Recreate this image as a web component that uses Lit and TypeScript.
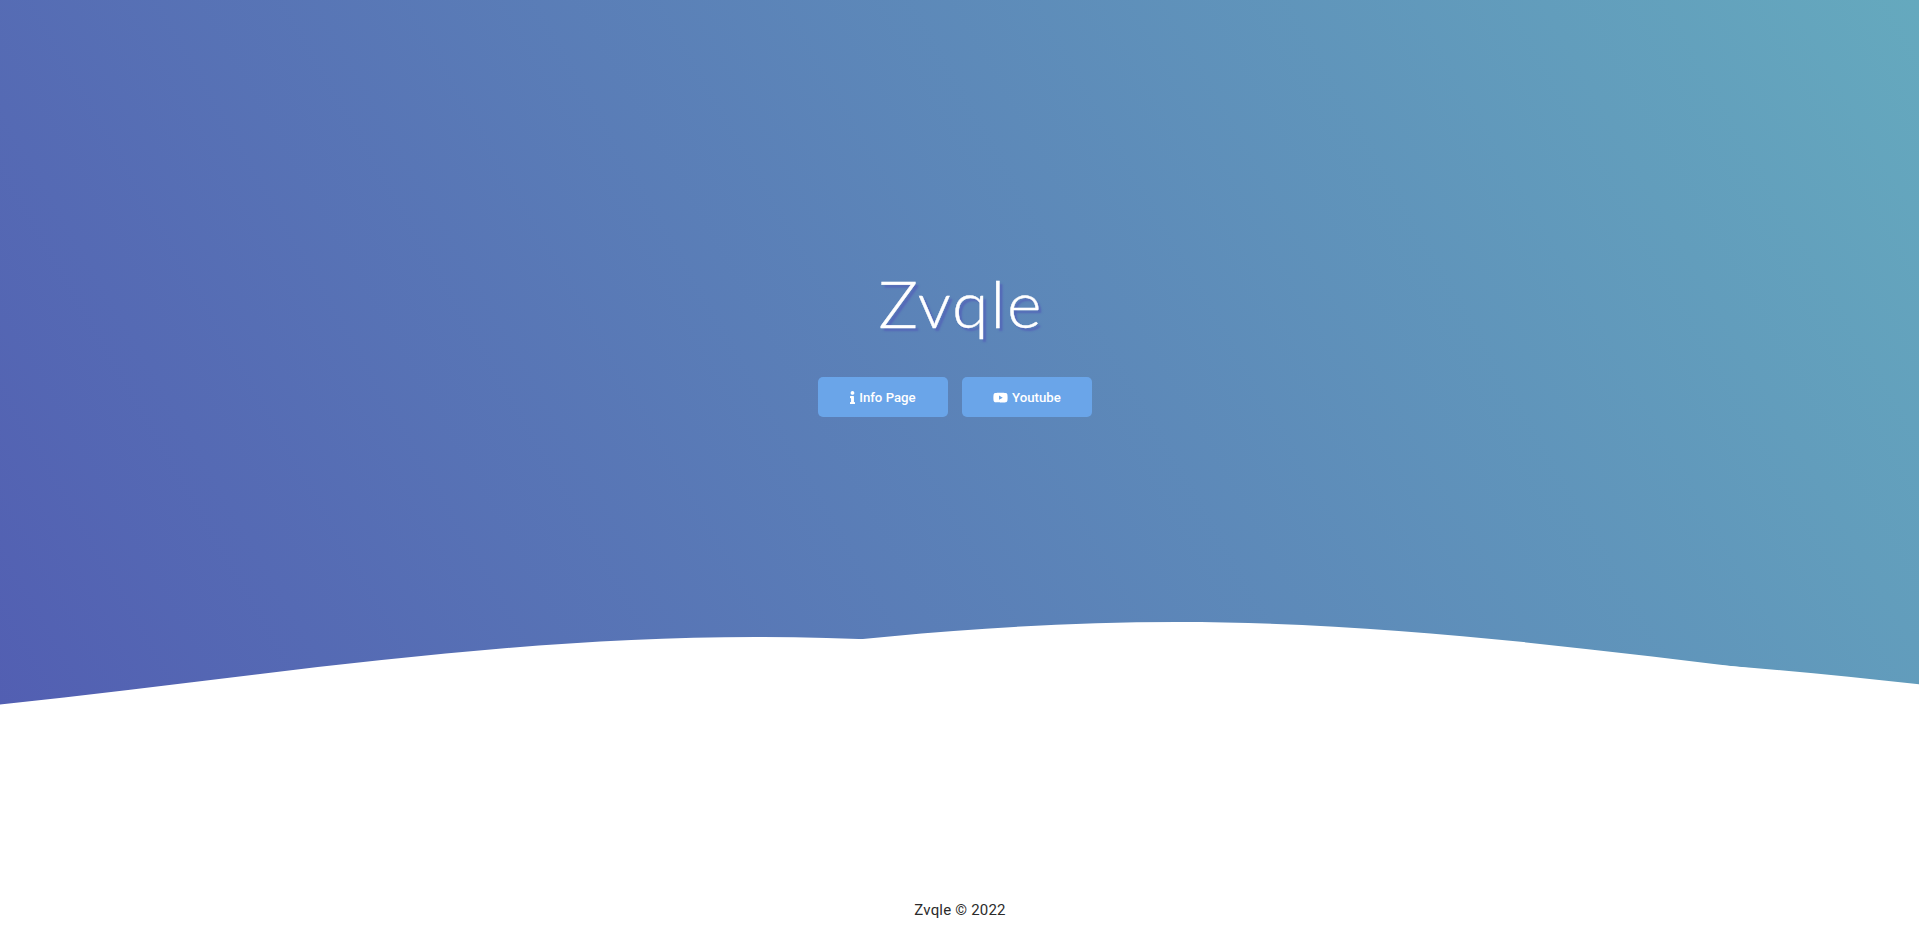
import { LitElement, html, css, svg } from "lit";
import { customElement } from "lit/decorators.js";

const WAVE = "M-248 44c30 0 58-18 88-18s58 18 88 18 58-18 88-18 58 18 88 18 58-18 88-18 58 18 88 18v44h-528z";

// Each wave: horizontal and vertical shift in viewBox units.
const WAVES = [
  { x: 76, y: 0 },
  { x: 43.1, y: 3 },
  { x: 101.7, y: 7 },
];

@customElement("app-root")
export class AppRoot extends LitElement {
  static styles = css`
    :host {
      display: flex;
      flex-direction: column;
      height: 100vh;
      overflow: hidden;
      background: #fff;
      font-family: Roboto, sans-serif;
    }
    .header {
      display: flex;
      flex-direction: column;
      height: 752px;
      flex: none;
      color: #fff;
      background: linear-gradient(60deg, rgb(82, 94, 178) 0%, rgb(101, 169, 190) 100%);
    }
    .inner {
      flex: 1;
      display: flex;
      flex-direction: column;
      align-items: center;
      padding-top: 264px;
      box-sizing: border-box;
    }
    h1 {
      margin: 0 0 0 3px;
      font: 300 66px/77px Lato, sans-serif;
      letter-spacing: 2px;
      -webkit-text-stroke: 0.4px #fff;
      text-shadow: 3px 3px 2px #5468b8;
    }
    .actions {
      display: flex;
      gap: 14px;
      margin: 36px 10px 0 0;
    }
    .btn {
      display: flex;
      align-items: center;
      justify-content: center;
      gap: 3.8px;
      width: 130px;
      height: 40px;
      padding: 1px 0 0 1px;
      border: 0;
      border-radius: 5px;
      background: #6aa5e9;
      color: #fff;
      font: 500 13.2px/16px Roboto, sans-serif;
    }
    .icon {
      height: 13.333px;
      fill: currentColor;
    }
    .waves {
      display: block;
      width: 100%;
      height: 140px;
      flex: none;
    }
    .footer {
      flex: 1;
      display: flex;
      justify-content: center;
      padding: 148px 0 0 1px;
      color: #2b2b2b;
      font-size: 15px;
      line-height: 20px;
      letter-spacing: 0.2px;
    }
  `;

  render() {
    return html`
      <div class="header">
        <div class="inner">
          <h1>Zvqle</h1>
          <div class="actions">
            <button class="btn">
              <svg class="icon" viewBox="0 0 192 512"><path d="M20 424.229h20V279.771H20c-11.046 0-20-8.954-20-20V212c0-11.046 8.954-20 20-20h112c11.046 0 20 8.954 20 20v212.229h20c11.046 0 20 8.954 20 20V492c0 11.046-8.954 20-20 20H20c-11.046 0-20-8.954-20-20v-47.771c0-11.046 8.954-20 20-20zM96 0C56.235 0 24 32.235 24 72s32.235 72 72 72 72-32.235 72-72S135.764 0 96 0z"/></svg>
              <span>Info Page</span>
            </button>
            <button class="btn">
              <svg class="icon" viewBox="0 0 576 512"><path d="M549.655 124.083c-6.281-23.65-24.787-42.276-48.284-48.597C458.781 64 288 64 288 64S117.22 64 74.629 75.486c-23.497 6.322-42.003 24.947-48.284 48.597-11.412 42.867-11.412 132.305-11.412 132.305s0 89.438 11.412 132.305c6.281 23.65 24.787 41.5 48.284 47.821C117.22 448 288 448 288 448s170.78 0 213.371-11.486c23.497-6.321 42.003-24.171 48.284-47.821 11.412-42.867 11.412-132.305 11.412-132.305s0-89.438-11.412-132.305zm-317.51 213.508V175.185l142.739 81.205-142.739 81.201z"/></svg>
              <span>Youtube</span>
            </button>
          </div>
        </div>
        <svg class="waves" viewBox="0 24 150 28" preserveAspectRatio="none">
          ${WAVES.map((w) => svg`<path fill="#fff" transform="translate(${w.x} ${w.y})" d=${WAVE} />`)}
        </svg>
      </div>
      <div class="footer">Zvqle © 2022</div>
    `;
  }
}
